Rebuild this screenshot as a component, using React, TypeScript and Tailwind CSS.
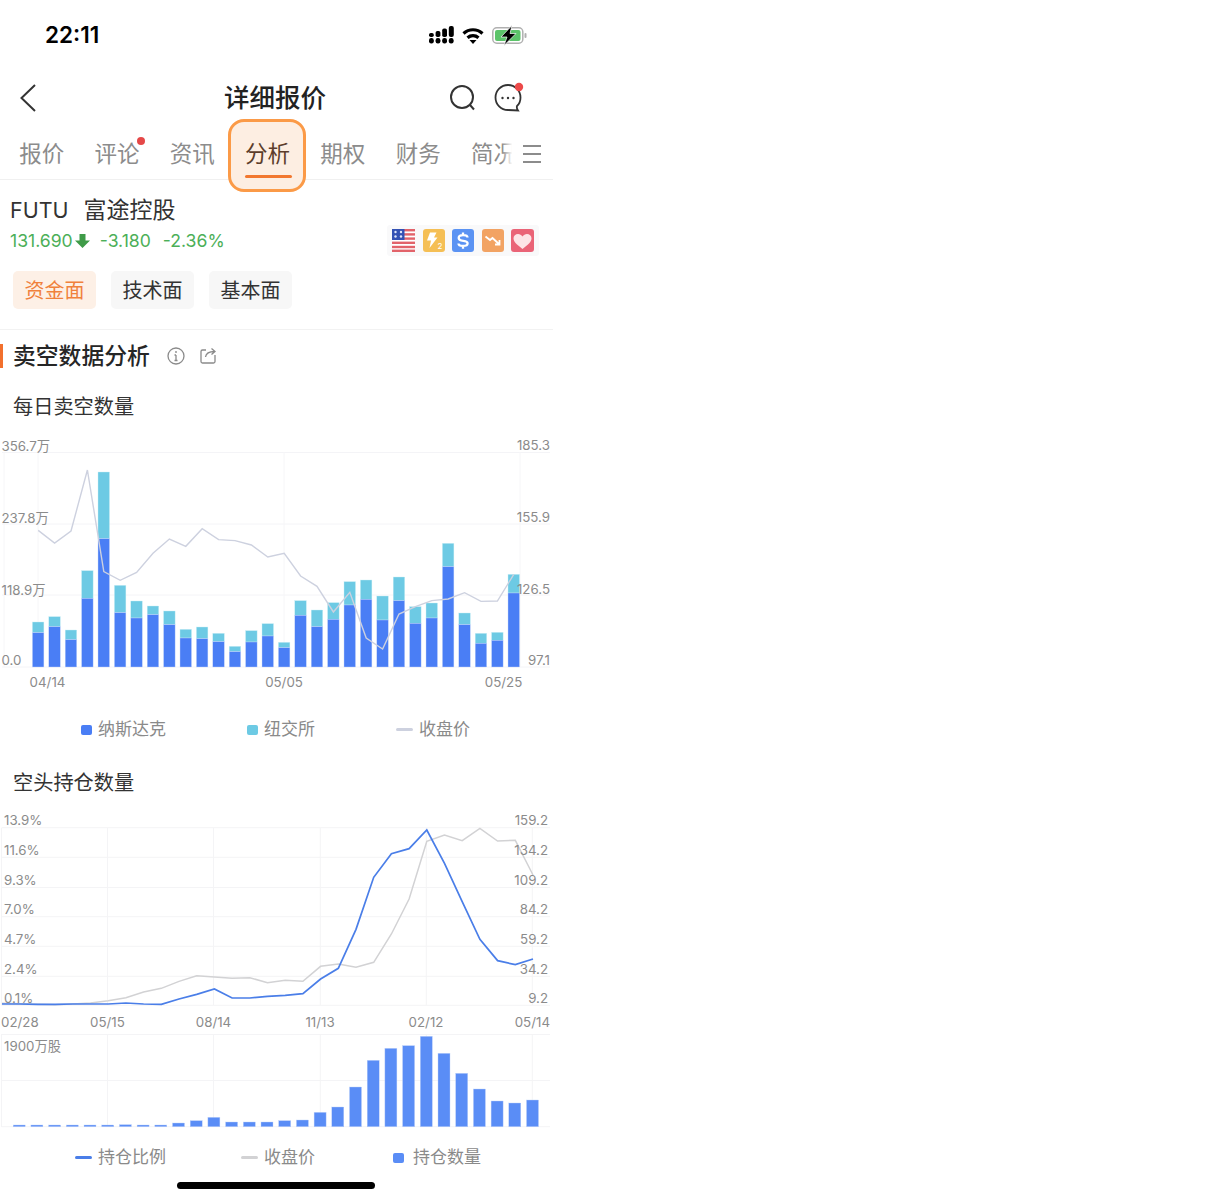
import React from "react";

const tabs = ["报价", "评论", "资讯", "分析", "期权", "财务", "简况"];

// bar tops read off the picture: [total top, nasdaq top], page px
const dailyBars = [
  [576, 608], [560, 590], [600, 629], [422, 505], [126, 326], [466, 548], [513, 564], [528, 554],
  [543, 584], [598, 624], [591, 626], [610, 635], [649, 665], [602, 636], [581, 618], [637, 653],
  [512, 556], [540, 590], [518, 568], [455, 525], [450, 508], [498, 570], [441, 512], [530, 580],
  [519, 564], [340, 410], [549, 584], [610, 640], [607, 631], [433, 489],
].map(([a, b]) => [430 + a / 3, 430 + b / 3]);

const dailyLine = [301, 339, 303, 120, 425, 451, 427, 370, 327, 349, 296, 329, 332, 345, 381, 370, 438, 469, 546, 487, 624, 657, 552, 530, 512, 507, 488, 514, 513, 433]
  .map((v, i) => `${38.2 + i * 16.4},${430 + v / 3}`)
  .join(" ");

const ratioLine = [612, 612, 613, 613, 612, 612, 612, 609, 612, 613, 597, 583, 567, 594, 594, 589, 586, 581, 537, 505, 388, 232, 161, 146, 90, 190, 305, 418, 482, 494, 477]
  .map((v, i) => `${2 + i * 17.7},${800 + v / 3}`)
  .join(" ");

const priceLine = [610, 611, 613, 614, 612, 609, 602, 593, 576, 565, 544, 527, 531, 535, 533, 548, 541, 544, 499, 492, 502, 487, 402, 297, 124, 105, 122, 85, 123, 121, 225]
  .map((v, i) => `${2 + i * 17.7},${800 + v / 3}`)
  .join(" ");

const holdBars = [285, 285, 285, 285, 285, 285, 284, 285, 285, 279, 272, 262, 276, 276, 276, 272, 270, 247, 231, 171, 91, 55, 47, 19, 70, 130, 177, 213, 219, 210]
  .map((v) => 1030 + v / 3);

const axisText = "text-[13.3px] fill-[#8b8b8b]";

function Legend({ kind, color, label, x, gap = 6 }: { kind: "box" | "line"; color: string; label: string; x: number; gap?: number }) {
  return (
    <div className="absolute top-0 flex h-6 items-center pt-px" style={{ left: x }}>
      {kind === "box" ? (
        <span className="h-[10px] w-[11px] rounded-[2px]" style={{ background: color }} />
      ) : (
        <span className="h-[2.5px] w-[17px] rounded-full" style={{ background: color }} />
      )}
      <span className="text-[17px] text-[#8a8a8a]" style={{ marginLeft: gap }}>{label}</span>
    </div>
  );
}

function DailyChart() {
  return (
    <svg viewBox="0 432 553 260" className="mt-[11px] block h-[260px] w-[553px]">
      {[452.5, 524, 595, 667].map((y) => (
        <line key={y} x1="2" x2="550" y1={y} y2={y} stroke="#f4f4f7" />
      ))}
      {[4, 38, 284, 520].map((x) => (
        <line key={x} x1={x} x2={x} y1="452" y2="667" stroke="#f6f6f8" />
      ))}
      {dailyBars.map(([top, split], i) => (
        <g key={i}>
          <rect x={32.4 + i * 16.4} y={top} width="11.5" height={split - top} fill="#6dcae4" stroke="#c9edf6" strokeWidth="0.4" />
          <rect x={32.4 + i * 16.4} y={split} width="11.5" height={667 - split} fill="#4a7ef5" stroke="#c5d6fb" strokeWidth="0.4" />
        </g>
      ))}
      <polyline points={dailyLine} fill="none" stroke="#cdd1df" strokeWidth="1.4" />
      <g className={axisText}>
        <text x="1.5" y="451">356.7万</text>
        <text x="1.5" y="522.5">237.8万</text>
        <text x="1.5" y="594.5">118.9万</text>
        <text x="1.5" y="665">0.0</text>
        <text x="550" y="449.5" textAnchor="end">185.3</text>
        <text x="550" y="521.5" textAnchor="end">155.9</text>
        <text x="550" y="593.5" textAnchor="end">126.5</text>
        <text x="550" y="665" textAnchor="end">97.1</text>
        <text x="47.5" y="687" textAnchor="middle">04/14</text>
        <text x="284" y="687" textAnchor="middle">05/05</text>
        <text x="503.5" y="687" textAnchor="middle">05/25</text>
      </g>
    </svg>
  );
}

function HoldChart() {
  const left = ["13.9%", "11.6%", "9.3%", "7.0%", "4.7%", "2.4%", "0.1%"];
  const right = ["159.2", "134.2", "109.2", "84.2", "59.2", "34.2", "9.2"];
  const labelY = [825, 855, 885, 914, 944, 974, 1003];
  return (
    <svg viewBox="0 808 553 327" className="mt-[11px] block h-[327px] w-[553px]">
      {[827.7, 857.3, 887.5, 916.7, 946.3, 976.3, 1005.3, 1034.5, 1080.5, 1126.7].map((y) => (
        <line key={y} x1="1.5" x2="550" y1={y} y2={y} stroke="#f4f4f6" />
      ))}
      {[1.5, 107.5, 213.5, 320.3, 426.3, 532.3].map((x) => (
        <g key={x}>
          <line x1={x} x2={x} y1="828" y2="1005" stroke="#f4f4f6" />
          <line x1={x} x2={x} y1="1034" y2="1127" stroke="#f4f4f6" />
        </g>
      ))}
      <polyline points={priceLine} fill="none" stroke="#d2d2d4" strokeWidth="1.5" />
      <polyline points={ratioLine} fill="none" stroke="#4a7ee8" strokeWidth="1.7" />
      {holdBars.map((top, i) => (
        <rect key={i} x={13.2 + i * 17.7} y={top} width="12" height={1126.7 - top} fill="#5a8df6" stroke="#bcd0fb" strokeWidth="0.4" />
      ))}
      <g className={axisText}>
        {left.map((t, i) => (
          <text key={t} x="4" y={labelY[i]}>{t}</text>
        ))}
        {right.map((t, i) => (
          <text key={t} x="548" y={labelY[i]} textAnchor="end">{t}</text>
        ))}
        <text x="1" y="1027">02/28</text>
        <text x="107.5" y="1027" textAnchor="middle">05/15</text>
        <text x="213.5" y="1027" textAnchor="middle">08/14</text>
        <text x="320" y="1027" textAnchor="middle">11/13</text>
        <text x="426" y="1027" textAnchor="middle">02/12</text>
        <text x="550" y="1027" textAnchor="end">05/14</text>
        <text x="4" y="1051">1900万股</text>
      </g>
    </svg>
  );
}

function MarketBadges() {
  return (
    <div className="mb-[2px] flex h-[31px] w-[152px] items-center gap-[7.5px] rounded-[3px] bg-[#f9f9fa] pl-[5px]">
      <svg width="23" height="23" viewBox="0 0 23 23">
        <rect width="23" height="23" rx="3" fill="#fff" />
        {[0, 4.2, 8.4, 12.6, 16.8, 20.6].map((y) => (
          <rect key={y} y={y} width="23" height="2.4" fill="#e2636a" />
        ))}
        <rect width="12.5" height="11" fill="#3452b4" />
        {[3.5, 9].map((x) =>
          [3, 7.5].map((y) => <circle key={`${x}-${y}`} cx={x} cy={y} r="1.2" fill="#dfe6fa" />)
        )}
      </svg>
      <svg width="22" height="23" viewBox="0 0 22 23">
        <rect width="22" height="23" rx="3" fill="#f5bf55" />
        <path d="M7 3.500h6.500l-2.500 5h3.500l-8 10.500 1.500-7.500H4z" fill="#fff" />
        <text x="14.5" y="20" fontSize="8" fill="#fff">2</text>
      </svg>
      <svg width="22" height="23" viewBox="0 0 22 23">
        <rect width="22" height="23" rx="3" fill="#5b93f3" />
        <path d="M15.500 8.500c0-1.500-2-2.300-4.500-2.300s-4.300.9-4.300 2.700c0 4.300 8.900 1.600 8.900 5.300 0 1.900-2 2.700-4.600 2.700s-4.500-.8-4.500-2.400M11 3.500v2.700M11 17v2.700" fill="none" stroke="#fff" strokeWidth="2.300" />
      </svg>
      <svg width="22" height="23" viewBox="0 0 22 23">
        <rect width="22" height="23" rx="3" fill="#f2a363" />
        <path d="M3.500 7.500l4.500 3.500 2.500-2 7 6.500M17.500 11v4.500H13" fill="none" stroke="#fff" strokeWidth="1.800" />
      </svg>
      <svg width="23" height="23" viewBox="0 0 23 23">
        <rect width="23" height="23" rx="3" fill="#ea6477" />
        <path d="M11.500 20C5.500 15.500 2.500 12.800 2.500 9.300 2.500 6.600 4.600 5 7 5c1.900 0 3.400.9 4.500 2.400C12.600 5.900 14.100 5 16 5c2.400 0 4.500 1.600 4.500 4.300 0 3.500-3 6.200-9 10.700z" fill="#fde4e6" />
      </svg>
    </div>
  );
}

export default function App() {
  return (
    <div className="min-h-[1200px] w-[553px] bg-white font-['Inter','Noto_Sans_CJK_SC',sans-serif] text-[#2b2b2b]">
      {/* status bar */}
      <div className="flex h-[70px] items-center justify-between pl-[45px] pr-[26px]">
        <span className="text-[22.5px] font-semibold text-black">22:11</span>
        <div className="flex items-center gap-2">
          <svg width="25" height="18" viewBox="0 0 25 18" fill="#000">
            {[0, 6.6, 13.2, 19.8].map((x) => (
              <rect key={x} x={x} y="12" width="4.800" height="5.400" rx="2.200" />
            ))}
            <rect x="0" y="7" width="4.800" height="4" rx="1.800" />
            <rect x="6.600" y="5" width="4.800" height="6" rx="1.800" />
            <rect x="13.200" y="2.500" width="4.800" height="8.500" rx="1.800" />
            <rect x="19.800" y="0" width="5" height="11" rx="2" />
          </svg>
          <svg width="22" height="17" viewBox="0 0 22 17" fill="none" stroke="#000" strokeWidth="3.200">
            <path d="M1.500 6.500c5.500-5 13.500-5 19 0" />
            <path d="M5.500 10.800c3.300-2.800 7.700-2.800 11 0" />
            <path d="M7.500 13h7l-3.500 4z" fill="#000" stroke="none" />
          </svg>
          <svg width="35" height="17" viewBox="0 0 35 17" className="overflow-visible">
            <rect x="0.800" y="0.800" width="30" height="15.400" rx="4" fill="#fff" stroke="#b0b0b0" strokeWidth="1.500" />
            <rect x="3" y="3" width="25.500" height="11" rx="2" fill="#5cc46a" />
            <rect x="32.500" y="6" width="2" height="5" rx="1" fill="#b0b0b0" />
            <path d="M20 -1.500 9 10h6l-3 8.500L24 6.500h-6z" fill="#000" stroke="#fff" strokeWidth="0.700" />
          </svg>
        </div>
      </div>

      {/* header */}
      <div className="relative flex h-[55px] items-center justify-center pr-[3px] pt-[1px]">
        <svg width="16" height="28" viewBox="0 0 16 28" fill="none" stroke="#333" strokeWidth="2" className="absolute left-[20px] top-[14px]">
          <path d="M15 1 1.500 14 15 27" />
        </svg>
        <span className="text-[25.5px] font-medium text-[#222]">详细报价</span>
        <svg width="28" height="28" viewBox="0 0 28 28" fill="none" stroke="#333" strokeWidth="2" className="absolute left-[449px] top-[14px]">
          <circle cx="13" cy="13" r="11" />
          <path d="m21 21 4 4.500" />
        </svg>
        <svg width="34" height="36" viewBox="0 0 34 36" fill="none" stroke="#333" strokeWidth="1.800" className="absolute left-[493px] top-[7px]">
          <path d="M15 8c-7 0-12.500 5.500-12.500 12.500S8 33 15 33l10 .5c-1-1.500-1.500-3-1-4.500 2.500-2.200 3.500-5 3.500-8.500C27.500 13.500 22 8 15 8z" />
          <circle cx="9.500" cy="21" r="1.200" fill="#333" stroke="none" />
          <circle cx="15" cy="21" r="1.200" fill="#333" stroke="none" />
          <circle cx="20.500" cy="21" r="1.200" fill="#333" stroke="none" />
          <circle cx="26" cy="10" r="4.200" fill="#ec4a4a" stroke="none" />
        </svg>
      </div>

      {/* tabs */}
      <div className="relative flex h-[55px] items-center border-b border-[#f0f0f0] pl-[4px] pt-[4px]">
        {tabs.map((t, i) => (
          <div key={t} className="relative flex w-[75.3px] justify-center">
            {t === "分析" && (
              <div className="absolute left-[-1.5px] top-[-18px] h-[73px] w-[78px] rounded-[16px] border-[3px] border-[#fb9a47] bg-[#fdeee2]" />
            )}
            <span className={t === "分析" ? "relative text-[22.5px] text-[#5c3d2b]" : "text-[22.5px] text-[#8c8c8c]"}>{t}</span>
            {t === "分析" && <span className="absolute left-[15px] top-[38px] h-[3px] w-[47px] rounded-full bg-[#f2782f]" />}
            {i === 1 && <span className="absolute left-[58px] top-0 h-[8px] w-[8px] rounded-full bg-[#e54848]" />}
          </div>
        ))}
        <div className="absolute right-0 top-[1px] flex h-[52px] w-[52px] items-center justify-end bg-gradient-to-r from-white/0 from-[2%] to-white to-[22%] pr-[12px]">
          <div className="flex w-[18px] flex-col gap-[6px] pt-[3px]">
            <span className="h-[2px] bg-[#8c8c8c]" />
            <span className="h-[2px] bg-[#8c8c8c]" />
            <span className="h-[2px] bg-[#8c8c8c]" />
          </div>
        </div>
      </div>

      {/* quote */}
      <div className="mt-[17px] flex h-[26px] items-center pl-[10px] text-[23px] text-[#333]">
        <span className="text-[21.5px]">FUTU</span>
        <span className="ml-[15px]">富途控股</span>
      </div>
      <div className="mt-[6px] flex h-[24px] items-center justify-between pl-[10px] pr-[14px] text-[17.6px] text-[#4caf58]">
        <div className="flex items-center">
          <span>131.690</span>
          <svg width="15" height="14" viewBox="0 0 15 14" className="ml-[2px]" fill="#3f9b48">
            <path d="M4.500 0h6v6.500H15L7.500 14 0 6.500h4.500z" />
          </svg>
          <span className="ml-[10px]">-3.180</span>
          <span className="ml-[12px]">-2.36%</span>
        </div>
        <MarketBadges />
      </div>

      {/* sub tabs */}
      <div className="mt-[18px] flex gap-[15px] pl-[13px]">
        <div className="flex h-[38px] w-[83px] items-center justify-center rounded-[5px] bg-[#fdf0e6] pt-px text-[20px] text-[#f0813c]">资金面</div>
        <div className="flex h-[38px] w-[83px] items-center justify-center rounded-[5px] bg-[#f7f7f7] pt-px text-[20px] text-[#333]">技术面</div>
        <div className="flex h-[38px] w-[83px] items-center justify-center rounded-[5px] bg-[#f7f7f7] pt-px text-[20px] text-[#333]">基本面</div>
      </div>
      <div className="mt-[20px] h-px bg-[#f2f2f2]" />

      {/* section title */}
      <div className="mt-[14px] flex h-[24px] items-center border-l-[3px] border-[#f2702d] pl-[10px]">
        <span className="text-[22.8px] font-medium text-[#262626]">卖空数据分析</span>
        <svg width="20" height="20" viewBox="0 0 20 20" fill="none" stroke="#8a8a8a" strokeWidth="1.300" className="ml-[16px]">
          <circle cx="10" cy="10" r="8" />
          <path d="M10 9v5.500M8.500 14.500h3M8.500 9H10" />
          <circle cx="10" cy="6" r="0.900" fill="#8a8a8a" stroke="none" />
        </svg>
        <svg width="18" height="18" viewBox="0 0 18 18" fill="none" stroke="#8a8a8a" strokeWidth="1.300" className="ml-[13px]">
          <path d="M7 3H3.500A1.500 1.500 0 0 0 2 4.500v10A1.500 1.500 0 0 0 3.500 16h11a1.500 1.500 0 0 0 1.500-1.500V8" />
          <path d="M6.500 10c.5-3.500 3-5.500 9-5.500M12.500 1.500l3.500 3-3.500 3" />
        </svg>
      </div>

      <div className="mt-[25px] flex h-[28px] items-center pl-[13px] pt-px text-[20.2px] text-[#333]">每日卖空数量</div>
      <DailyChart />
      <div className="relative mt-[25px] h-6">
        <Legend kind="box" color="#4a7ef5" label="纳斯达克" x={81} />
        <Legend kind="box" color="#6dcae4" label="纽交所" x={247} />
        <Legend kind="line" color="#cdd1df" label="收盘价" x={396} />
      </div>

      <div className="mt-[28px] flex h-[28px] items-center pl-[13px] pt-px text-[20.2px] text-[#333]">空头持仓数量</div>
      <HoldChart />
      <div className="relative mt-[10px] h-6">
        <Legend kind="line" color="#4a7ee8" label="持仓比例" x={75} />
        <Legend kind="line" color="#d2d2d4" label="收盘价" x={241} />
        <Legend kind="box" color="#5a8df6" label="持仓数量" x={393} gap={9} />
      </div>

      <div className="ml-[177px] mt-[13px] h-[7px] w-[198px] rounded-full bg-black" />
    </div>
  );
}
